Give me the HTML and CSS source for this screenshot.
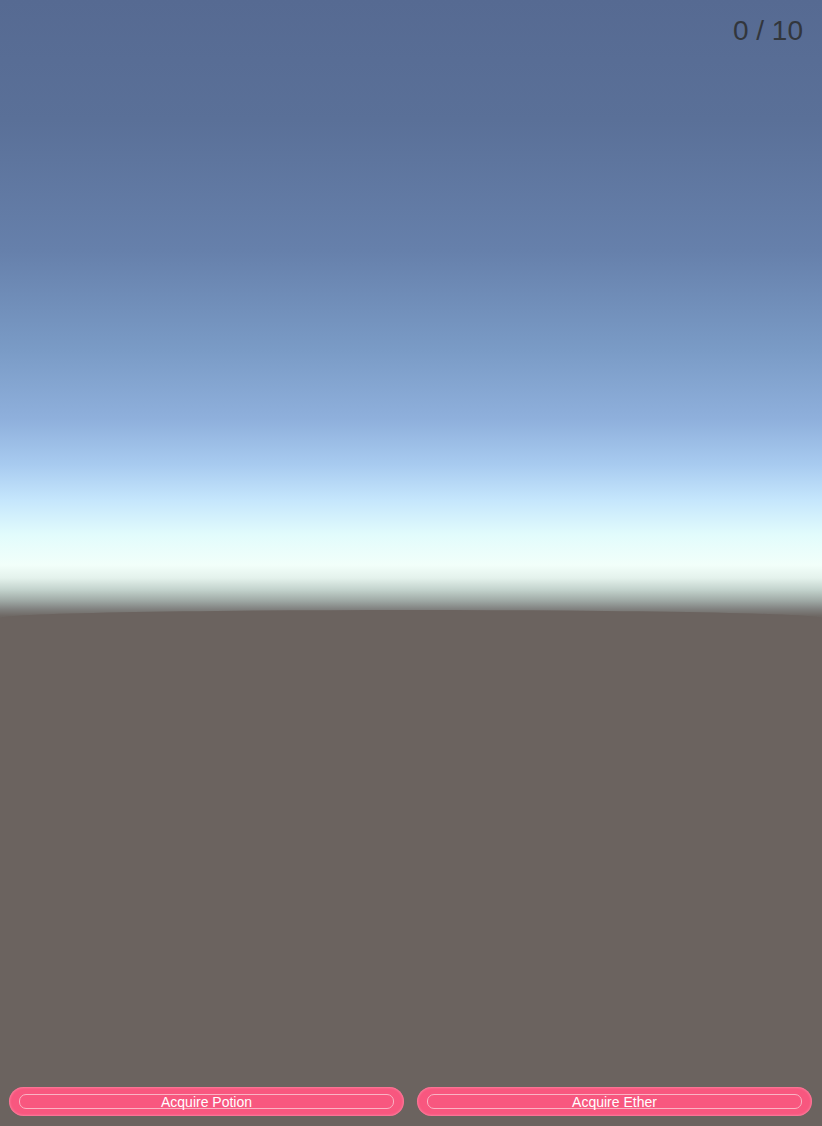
FILE: index.html
```html
<!DOCTYPE html>
<html lang="en">
<head>
    <meta charset="UTF-8">
    <meta name="viewport" content="width=device-width, initial-scale=1.0">
    <title>Inventory</title>
    <link rel="stylesheet" href="styles.css">
</head>
<body>
    <div class="scene">
        <div class="sky">
            <div class="hud">
                <span class="counter" id="counter">0 / 10</span>
            </div>
        </div>
        <div class="ground">
            <div class="actions">
                <button class="action" onclick="acquire('potion')"><span class="action-inner">Acquire Potion</span></button>
                <button class="action" onclick="acquire('ether')"><span class="action-inner">Acquire Ether</span></button>
            </div>
        </div>
    </div>

    <script>
        let itens = 0;
        const limite = 10;

        function acquire(tipo) {
            if (itens >= limite) return;
            itens++;
            document.getElementById('counter').textContent = `${itens} / ${limite}`;
        }
    </script>
</body>
</html>
```

FILE: styles.css
```css
html, body {
    margin: 0;
    padding: 0;
    height: 100%;
}
body {
    font-family: "Liberation Sans", Arial, sans-serif;
    background-color: #6b635f;
    overflow: hidden;
}
.scene {
    display: flex;
    flex-direction: column;
    height: 100vh;
    background: linear-gradient(to bottom,
        #566a92 0px,
        #5a7098 120px,
        #6680ab 250px,
        #7a9bc6 350px,
        #8fb0dc 420px,
        #a8cbf0 465px,
        #c5e6fc 500px,
        #e2fcfc 535px,
        #f2fffa 565px,
        #e4f2ec 578px,
        #c2d2cc 590px,
        #9ea8a4 601px,
        #818280 609px,
        #6e6864 616px,
        #6b635f 622px);
}
.sky {
    flex: 0 0 610px;
}
.hud {
    display: flex;
    justify-content: flex-end;
    padding: 17px 19px 0 0;
}
.counter {
    font-size: 28px;
    line-height: 28px;
    color: #32363c;
}
.ground {
    flex: 1;
    display: flex;
    flex-direction: column;
    justify-content: flex-end;
    background-color: #6b635f;
    border-top-left-radius: 50% 8px;
    border-top-right-radius: 50% 8px;
}
.actions {
    display: flex;
    gap: 13px;
    padding: 0 10px 10px 9px;
}
.action {
    flex: 1;
    height: 29px;
    padding: 7px 10px;
    border: none;
    border-radius: 15px;
    background-color: #f8577f;
    box-shadow: inset 0 0 2px 1px rgba(255, 150, 175, 0.6);
    cursor: pointer;
    display: flex;
}
.action-inner {
    flex: 1;
    height: 15px;
    box-sizing: border-box;
    border: 1px solid #f9b4c4;
    border-radius: 7px;
    color: white;
    font-family: "Liberation Sans", Arial, sans-serif;
    font-size: 14px;
    line-height: 14px;
    text-align: center;
}
.action:hover {
    background-color: #f04d76;
}
```
